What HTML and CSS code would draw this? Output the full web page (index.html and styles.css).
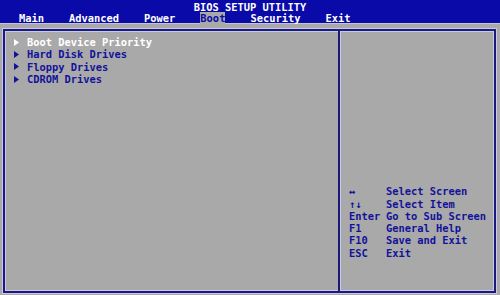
FILE: index.html
```html
<!DOCTYPE html>
<html lang="en">
<head>
<meta charset="UTF-8">
<title>BIOS Setup Utility</title>
<link rel="stylesheet" href="styles.css">
</head>
<body>

<header class="top">
  <div class="title">BIOS SETUP UTILITY</div>
  <nav class="tabs">
    <span>Main</span>
    <span>Advanced</span>
    <span>Power</span>
    <span class="on">Boot</span>
    <span>Security</span>
    <span>Exit</span>
  </nav>
</header>

<div class="screen">
  <div class="frame">
    <div class="main">
      <ul class="items">
        <li class="sel"><svg class="arrow" viewBox="0 0 5 7"><path d="M0 0L5 3.5L0 7Z"/></svg>Boot Device Priority</li>
        <li><svg class="arrow" viewBox="0 0 5 7"><path d="M0 0L5 3.5L0 7Z"/></svg>Hard Disk Drives</li>
        <li><svg class="arrow" viewBox="0 0 5 7"><path d="M0 0L5 3.5L0 7Z"/></svg>Floppy Drives</li>
        <li><svg class="arrow" viewBox="0 0 5 7"><path d="M0 0L5 3.5L0 7Z"/></svg>CDROM Drives</li>
      </ul>
    </div>
    <div class="help">
      <div class="keys">
        <span>&harr;</span><span>Select Screen</span>
        <span>&uarr;&darr;</span><span>Select Item</span>
        <span>Enter</span><span>Go to Sub Screen</span>
        <span>F1</span><span>General Help</span>
        <span>F10</span><span>Save and Exit</span>
        <span>ESC</span><span>Exit</span>
      </div>
    </div>
  </div>
</div>

</body>
</html>
```

FILE: styles.css
```css
* { margin: 0; padding: 0; box-sizing: border-box; }

body {
  width: 500px;
  height: 295px;
  overflow: hidden;
  background: #a9a9a9;
  font-family: "DejaVu Sans Mono", "Liberation Mono", monospace;
  font-size: 10.4px;
  font-weight: bold;
}

.top {
  height: 24px;
  background: #0a0aa8;
  color: #fff;
  border-bottom: 1px solid #c4c4d0;
}

.title {
  height: 12px;
  line-height: 12px;
  text-align: center;
  padding-top: 1px;
}

.tabs {
  display: flex;
  gap: 25px;
  padding-left: 19px;
  height: 12px;
  line-height: 12px;
}

.tabs .on {
  background: #a9a9a9;
  color: #0a0aa8;
}

.screen {
  height: 271px;
  padding: 5px 4px 2px 3px;
}

.frame {
  height: 100%;
  display: flex;
  border: 2px solid #1c1c78;
  box-shadow: 0 0 0 1px #c8c8ee, inset 0 0 0 1px #c8c8ee;
}

.main {
  width: 335px;
  border-right: 2px solid #1c1c78;
  box-shadow: 1px 0 0 #c8c8ee;
  padding: 5px 0 0 9px;
}

.items {
  list-style: none;
}

.items li {
  height: 12.3px;
  line-height: 12.3px;
  color: #12129a;
  display: flex;
  align-items: center;
}

.items li.sel {
  color: #fff;
}

.arrow {
  width: 5px;
  height: 7px;
  margin-right: 8px;
  fill: currentColor;
}

.help {
  flex: 1;
  display: flex;
  flex-direction: column;
  justify-content: flex-end;
  padding: 0 0 32px 9px;
}

.keys {
  display: grid;
  grid-template-columns: 37px auto;
  color: #12129a;
  line-height: 12.3px;
  white-space: nowrap;
}
```
